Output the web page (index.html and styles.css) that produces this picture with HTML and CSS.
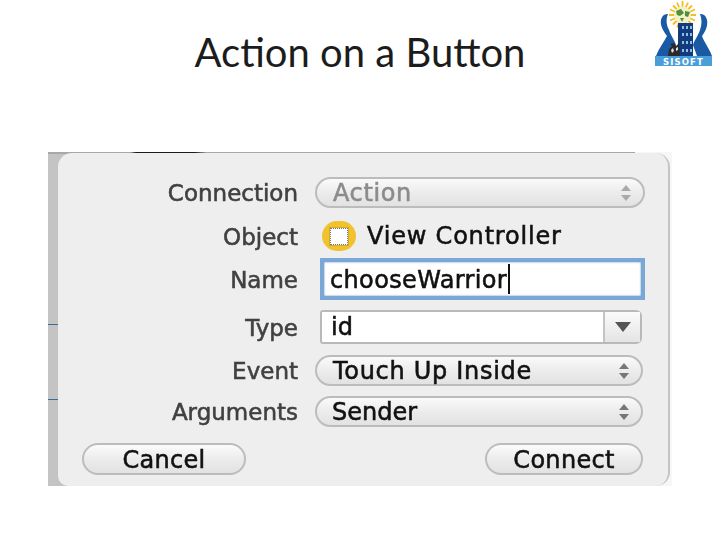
FILE: index.html
```html
<!DOCTYPE html>
<html lang="en">
<head>
<meta charset="utf-8">
<title>Action on a Button</title>
<link rel="stylesheet" href="styles.css">
</head>
<body>
<main class="slide">
  <h1 class="title">Action on a Button</h1>
  <svg class="logo" viewBox="0 0 90 75" width="90" height="75" aria-label="Sisoft logo">
    <g stroke="#f3bd1e" stroke-width="1.8">
      <path d="M52.5 1 52.5 29M39 15H66M43 5.500 62 24.500M62 5.500 43 24.500M47 2.500 58 27.500M58 2.500 47 27.500M40 9.500 65 20.500M65 9.500 40 20.500"/>
    </g>
    <circle cx="52.500" cy="15" r="8.500" fill="#f3f0c8"/>
    <path d="M46 11 51 9 54 13 50 16 47 15ZM55 11 60 12 58 17 55 16ZM50 18 54 18 52 22Z" fill="#4f8f3a"/>
    <path d="M26 56C29 48 34 42 37 36C33 31 30 25 31 20C32 16 34 14 38 14C36 19 36 24 39 30C41 36 45 41 46 45L41 56Z" fill="#1a5aa4"/>
    <path d="M82 56C79 48 74 42 72 36C76 31 78 25 77 20C76 16 74 14 70 14C72 19 72 24 70 30C68 36 64 41 63 45L67 56Z" fill="#1a5aa4"/>
    <rect x="48" y="23" width="15" height="33" fill="#123b7d"/>
    <g fill="#8dbde6">
      <rect x="52" y="26" width="2" height="3"/><rect x="56" y="26" width="2" height="3"/><rect x="60" y="26" width="2" height="3"/>
      <rect x="52" y="33" width="2" height="3"/><rect x="56" y="33" width="2" height="3"/><rect x="60" y="33" width="2" height="3"/>
      <rect x="52" y="41" width="2" height="3"/><rect x="56" y="41" width="2" height="3"/><rect x="60" y="41" width="2" height="3"/>
      <rect x="52" y="49" width="2" height="3"/><rect x="56" y="49" width="2" height="3"/><rect x="60" y="49" width="2" height="3"/>
    </g>
    <path d="M38 56 39 49 42 46 40 44 44 43 46 46 49 43 50 56Z" fill="#2a2a2a"/>
    <path d="M41 50 43 48 44 51 42 53ZM46 48 48 47 48 50 46 51Z" fill="#ddd"/>
    <rect x="25" y="56" width="57" height="10" fill="#4b9fd9"/>
    <text x="53.500" y="64.500" class="logo-text" text-anchor="middle">SISOFT</text>
  </svg>

  <section class="shot">
    <div class="shot-top"></div>
    <div class="sheet">
      <div class="row row-connection">
        <span class="label">Connection</span>
        <div class="pill pill-wide pill-muted">
          <span>Action</span>
          <svg class="stepper stepper-muted" viewBox="0 0 12 18" width="12" height="18"><path d="M6 1 11 7H1ZM6 17 1 11H11Z"/></svg>
        </div>
      </div>
      <div class="row row-object">
        <span class="label">Object</span>
        <div class="object">
          <span class="badge"><span class="badge-box"></span></span>
          <span class="object-name">View Controller</span>
        </div>
      </div>
      <div class="row row-name">
        <span class="label">Name</span>
        <div class="field"><span class="field-text">chooseWarrior</span><span class="caret"></span></div>
      </div>
      <div class="row row-type">
        <span class="label">Type</span>
        <div class="combo">
          <span class="combo-value">id</span>
          <span class="combo-arrow"><svg viewBox="0 0 16 10" width="16" height="10"><path d="M0 0H16L8 10Z"/></svg></span>
        </div>
      </div>
      <div class="row row-event">
        <span class="label">Event</span>
        <div class="pill pill-spaced">
          <span>Touch Up Inside</span>
          <svg class="stepper" viewBox="0 0 12 18" width="12" height="18"><path d="M6 1 11 7H1ZM6 17 1 11H11Z"/></svg>
        </div>
      </div>
      <div class="row row-args">
        <span class="label">Arguments</span>
        <div class="pill pill-tight">
          <span>Sender</span>
          <svg class="stepper" viewBox="0 0 12 18" width="12" height="18"><path d="M6 1 11 7H1ZM6 17 1 11H11Z"/></svg>
        </div>
      </div>
      <div class="actions">
        <button class="btn btn-cancel" type="button">Cancel</button>
        <button class="btn btn-connect" type="button">Connect</button>
      </div>
    </div>
    <span class="edge-line edge-line-a"></span>
    <span class="edge-line edge-line-b"></span>
  </section>
</main>
</body>
</html>
```

FILE: styles.css
```css
* { box-sizing: border-box; }
html, body { margin: 0; padding: 0; background: #fff; }
.slide {
  position: relative;
  width: 720px;
  height: 540px;
  overflow: hidden;
  padding-top: 30px;
}
.title {
  margin: 0;
  text-align: center;
  font: 400 40px/44px Lato, "Open Sans", sans-serif;
  color: #1c1c1c;
}
.logo { position: absolute; left: 630px; top: 0; }
.logo-text {
  font: 700 8.5px "DejaVu Sans", sans-serif;
  letter-spacing: 1.1px;
  fill: #fff;
}
.shot {
  position: relative;
  width: 624px;
  height: 334px;
  margin: 78px 0 0 48px;
  padding: 1px 2px 0 10px;
  background: linear-gradient(90deg, #c4c4c4, #a6a6a6 60%, #858585);
  filter: blur(.6px);
  overflow: hidden;
}
.shot::after {
  content: "";
  position: absolute;
  left: 587px;
  top: 0;
  width: 37px;
  height: 334px;
  background: #f7f7f7;
}
.shot-top {
  position: absolute;
  left: 0; top: 0;
  width: 587px;
  height: 2px;
  background: linear-gradient(90deg, #a8a8a8 0, #a8a8a8 14%, #1c1c1c 15%, #1c1c1c 25%, #a8a8a8 27%);
}
.sheet {
  position: relative;
  z-index: 1;
  height: 333px;
  padding-top: 24px;
  background: #eeeeee;
  border-radius: 14px 14px 14px 10px;
  border-right: 2px solid #c4c4c4;
  color: #111;
  font-family: "DejaVu Sans", sans-serif;
  -webkit-text-stroke: .55px currentColor;
}
.edge-line {
  position: absolute;
  left: 0;
  width: 10px;
  height: 1px;
  background: #3d6a99;
}
.edge-line-a { top: 172px; }
.edge-line-b { top: 247px; }
.row { display: flex; align-items: center; }
.row-connection { height: 31px; }
.row-object { height: 28px; margin-top: 14px; }
.row-name { height: 42px; margin-top: 8px; }
.row-type { height: 34px; margin-top: 10px; }
.row-event { height: 31px; margin-top: 11px; }
.row-args { height: 31px; margin-top: 10px; }
.label {
  width: 240px;
  margin-right: 17px;
  padding-top: 1px;
  flex: none;
  text-align: right;
  font-size: 23px;
  color: #404040;
}
.pill {
  flex: none;
  width: 328px;
  height: 31px;
  padding: 0 11px 0 16px;
  display: flex;
  align-items: center;
  justify-content: space-between;
  border: 2px solid #bcbcbc;
  border-radius: 16px;
  background: linear-gradient(#fafafa, #ececec 50%, #e2e2e2);
  font-size: 24px;
  letter-spacing: .6px;
}
.pill-wide { width: 330px; }
.pill-muted { color: #8b8b8b; }
.pill-spaced { letter-spacing: .7px; }
.pill-tight { letter-spacing: 0; padding-left: 15px; }
.stepper { fill: #777; stroke: none; }
.stepper-muted { fill: #a9a9a9; }
.object { display: flex; align-items: center; margin-left: 7px; }
.badge {
  width: 34px;
  height: 30px;
  margin-right: 11px;
  display: flex;
  align-items: center;
  justify-content: center;
  background: #f2c12e;
  border-radius: 15px;
}
.badge-box {
  width: 18px;
  height: 17px;
  background: #fff;
  border: 1px dotted #777;
  box-shadow: 0 0 0 1px #d7a92a;
}
.object-name { font-size: 24px; letter-spacing: .8px; }
.field {
  flex: none;
  width: 325px;
  height: 42px;
  margin-left: 5px;
  padding-left: 6px;
  display: flex;
  align-items: center;
  background: #fff;
  border: 4px solid #7aa8d6;
  box-shadow: inset 0 0 2px #4b7fb8;
  font-size: 24px;
}
.field-text { padding-top: 2px; letter-spacing: .35px; }
.caret {
  width: 1.5px;
  height: 30px;
  margin-left: 1px;
  background: #111;
}
.combo {
  flex: none;
  width: 322px;
  height: 34px;
  margin-left: 5px;
  display: flex;
  border: 2px solid #b9b9b9;
  border-radius: 3px 6px 6px 3px;
  background: #fff;
}
.combo-value { flex: 1; padding: 1px 0 0 9px; font-size: 24px; line-height: 28px; }
.combo-arrow {
  width: 37px;
  display: flex;
  align-items: center;
  justify-content: center;
  border-left: 2px solid #c4c4c4;
  background: linear-gradient(#fbfbfb, #e4e4e4);
}
.combo-arrow svg { fill: #555; stroke: none; }
.actions {
  display: flex;
  justify-content: space-between;
  margin-top: 16px;
  padding: 0 25px 0 24px;
}
.btn {
  height: 32px;
  padding: 1px 0 0;
  border: 2px solid #bcbcbc;
  border-radius: 16px;
  background: linear-gradient(#fbfbfb, #ececec 50%, #e2e2e2);
  font: 24px "DejaVu Sans", sans-serif;
  letter-spacing: .3px;
  color: #111;
}
.btn-cancel { width: 164px; }
.btn-connect { width: 158px; }
```
